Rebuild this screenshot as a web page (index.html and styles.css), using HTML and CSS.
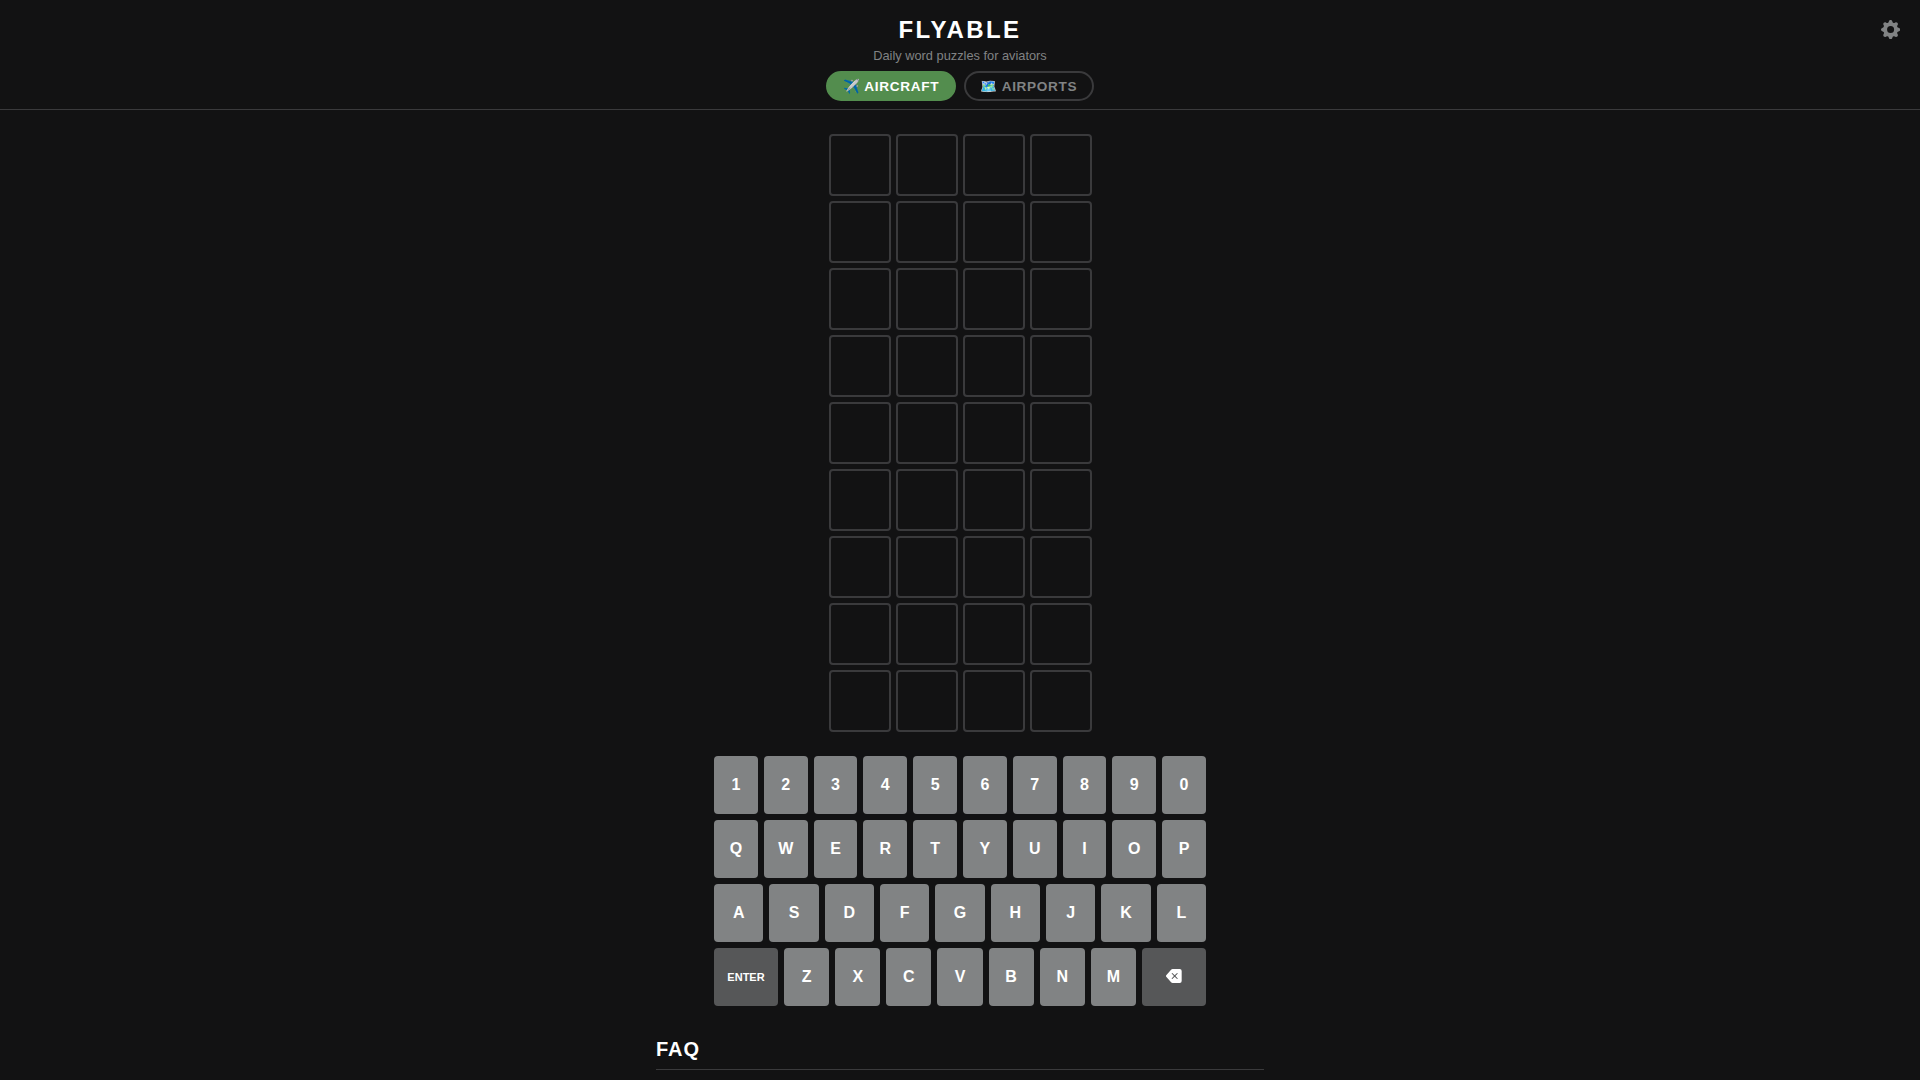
FILE: index.html
```
<!DOCTYPE html>
<html lang="en">
<head>
  <meta charset="UTF-8">
  <title>Flyable</title>
  <link rel="stylesheet" href="styles.css">
</head>
<body>
<header class="header">
  <h1>FLYABLE</h1>
  <p class="tagline">Daily word puzzles for aviators</p>
  <div class="tabs">
    <button class="tab active">✈️ AIRCRAFT</button>
    <button class="tab">🗺️ AIRPORTS</button>
  </div>
  <button class="settings" aria-label="Settings">
    <svg viewBox="0 0 16 16" fill="currentColor">
      <path d="M9.405 1.05c-.413-1.4-2.397-1.4-2.81 0l-.1.34a1.464 1.464 0 0 1-2.105.872l-.31-.17c-1.283-.698-2.686.705-1.987 1.987l.169.311c.446.82.023 1.841-.872 2.105l-.34.1c-1.4.413-1.4 2.397 0 2.81l.34.1a1.464 1.464 0 0 1 .872 2.105l-.17.31c-.698 1.283.705 2.686 1.987 1.987l.311-.169a1.464 1.464 0 0 1 2.105.872l.1.34c.413 1.4 2.397 1.4 2.81 0l.1-.34a1.464 1.464 0 0 1 2.105-.872l.31.17c1.283.698 2.686-.705 1.987-1.987l-.169-.311a1.464 1.464 0 0 1 .872-2.105l.34-.1c1.4-.413 1.4-2.397 0-2.81l-.34-.1a1.464 1.464 0 0 1-.872-2.105l.17-.31c.698-1.283-.705-2.686-1.987-1.987l-.311.169a1.464 1.464 0 0 1-2.105-.872l-.1-.34zM8 10.93a2.929 2.929 0 1 1 0-5.86 2.929 2.929 0 0 1 0 5.858z"/>
    </svg>
  </button>
</header>

<main>
  <div class="board" id="board"></div>

  <div class="keyboard">
    <div class="row">
      <button>1</button>
      <button>2</button>
      <button>3</button>
      <button>4</button>
      <button>5</button>
      <button>6</button>
      <button>7</button>
      <button>8</button>
      <button>9</button>
      <button>0</button>
    </div>
    <div class="row">
      <button>Q</button>
      <button>W</button>
      <button>E</button>
      <button>R</button>
      <button>T</button>
      <button>Y</button>
      <button>U</button>
      <button>I</button>
      <button>O</button>
      <button>P</button>
    </div>
    <div class="row">
      <button>A</button>
      <button>S</button>
      <button>D</button>
      <button>F</button>
      <button>G</button>
      <button>H</button>
      <button>J</button>
      <button>K</button>
      <button>L</button>
    </div>
    <div class="row">
      <button class="wide">ENTER</button>
      <button>Z</button>
      <button>X</button>
      <button>C</button>
      <button>V</button>
      <button>B</button>
      <button>N</button>
      <button>M</button>
      <button class="wide" aria-label="Backspace">
        <svg width="16" height="16" viewBox="0 0 16 16" fill="currentColor">
          <path d="M15.683 3a2 2 0 0 0-2-2h-7.08a2 2 0 0 0-1.519.698L.241 7.35a1 1 0 0 0 0 1.302l4.843 5.65A2 2 0 0 0 6.603 15h7.08a2 2 0 0 0 2-2V3zM5.829 5.854a.5.5 0 1 1 .707-.708l2.147 2.147 2.146-2.147a.5.5 0 1 1 .707.708L9.39 8l2.146 2.146a.5.5 0 0 1-.707.708L8.683 8.707l-2.147 2.147a.5.5 0 0 1-.707-.708L7.976 8 5.829 5.854z"/>
        </svg>
      </button>
    </div>
  </div>

  <section class="faq">
    <h2>FAQ</h2>
  </section>
</main>
<script>
  var board = document.getElementById("board");
  var rows = 9;
  var cols = 4;
  for (var i = 0; i < rows * cols; i++) {
    var tile = document.createElement("div");
    tile.className = "tile";
    board.appendChild(tile);
  }
</script>
</body>
</html>
```
FILE: styles.css
```
* {
  box-sizing: border-box;
  margin: 0;
  padding: 0;
}
body {
  height: 100vh;
  overflow: hidden;
  background-color: #121213;
  color: #fff;
  font-family: "Liberation Sans", Arial, sans-serif;
}
button {
  border: none;
  font-family: inherit;
  font-weight: bold;
  cursor: pointer;
}
.header {
  position: relative;
  height: 110px;
  padding-top: 16px;
  border-bottom: 1px solid #3a3a3c;
  text-align: center;
}
.header h1 {
  font-size: 24px;
  line-height: 28px;
  letter-spacing: 0.1em;
}
.tagline {
  margin-top: 4px;
  color: #818384;
  font-size: 12.8px;
  line-height: 15px;
}
.tabs {
  display: flex;
  justify-content: center;
  gap: 8px;
  margin-top: 8px;
}
.tab {
  height: 30px;
  padding: 0 14.4px;
  border: 2px solid #3a3a3c;
  border-radius: 20px;
  background: transparent;
  color: #818384;
  font-size: 13.6px;
  letter-spacing: 0.05em;
}
.tab.active {
  background-color: #538d4e;
  border-color: #538d4e;
  color: #fff;
}
.settings {
  position: absolute;
  top: 19.7px;
  right: 20px;
  background: none;
  color: #818384;
}
.settings svg {
  display: block;
  width: 19.2px;
  height: 19.2px;
}
.board {
  display: grid;
  grid-template-columns: repeat(4, 62px);
  grid-auto-rows: 62px;
  justify-content: center;
  gap: 5px;
  padding: 24px 0;
}
.tile {
  border: 2px solid #3a3a3c;
  border-radius: 4px;
}
.keyboard {
  display: flex;
  flex-direction: column;
  gap: 6px;
  width: 492px;
  margin: 0 auto;
}
.row {
  display: flex;
  gap: 6px;
}
.row button {
  flex: 1;
  height: 58px;
  border-radius: 4px;
  background-color: #818384;
  color: #fff;
  font-size: 16px;
}
.row .wide {
  flex: 0 0 64px;
  background-color: #565758;
  font-size: 11px;
}
.faq {
  width: 608px;
  margin: 32px auto 0;
}
.faq h2 {
  padding-bottom: 8px;
  border-bottom: 1px solid #3a3a3c;
  font-size: 20px;
  line-height: 23px;
  letter-spacing: 1px;
}
```
